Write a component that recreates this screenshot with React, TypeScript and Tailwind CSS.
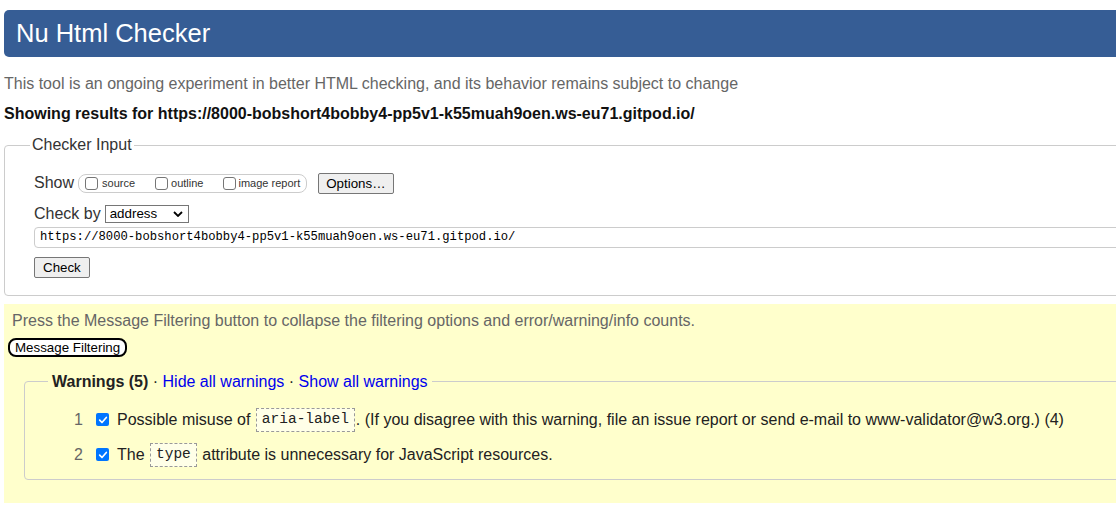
import React from 'react';

function Box({ checked = false }: { checked?: boolean }) {
  if (checked) {
    return (
      <span className="inline-flex h-[13px] w-[13px] items-center justify-center rounded-[2px] bg-[#0075ff]">
        <svg viewBox="0 0 12 12" className="h-[10px] w-[10px]">
          <path d="M2 6.2 L4.8 9 L10 3" fill="none" stroke="white" strokeWidth="2" strokeLinecap="round" strokeLinejoin="round" />
        </svg>
      </span>
    );
  }
  return <span className="inline-block h-[13px] w-[13px] rounded-[3px] border border-[#767676] bg-white" />;
}

function Code({ children }: { children: React.ReactNode }) {
  return (
    <code className="mx-[1px] inline-flex h-[24px] items-center border border-dashed border-[#999] bg-[#ffffe8] px-[5px] font-['Liberation_Mono',monospace] text-[14.5px] text-[#222]">
      {children}
    </code>
  );
}

export default function App() {
  const warnings = [
    {
      n: 1,
      body: (
        <>
          Possible misuse of <Code>aria-label</Code>. (If you disagree with this warning, file an issue report or send e-mail to www-validator@w3.org.) (4)
        </>
      ),
    },
    {
      n: 2,
      body: (
        <>
          The <Code>type</Code> attribute is unnecessary for JavaScript resources.
        </>
      ),
    },
  ];

  return (
    <div className="h-[516px] w-[1116px] overflow-hidden bg-white font-['Liberation_Sans',Arial,sans-serif] text-[16px] text-[#222]">
      <div className="w-[1150px] pl-[4px]">
        <h1 className="mt-[10px] flex h-[47px] items-center rounded-l-[5px] bg-[#365d95] pl-[12px] text-[25.5px] text-white">
          Nu Html Checker
        </h1>

        <p className="mt-[18px] h-[18px] leading-[18px] text-[#666]">
          This tool is an ongoing experiment in better HTML checking, and its behavior remains subject to change
        </p>
        <p className="mt-[12px] h-[18px] font-bold leading-[18px] text-[#111]">
          Showing results for https://8000-bobshort4bobby4-pp5v1-k55muah9oen.ws-eu71.gitpod.io/
        </p>

        <fieldset className="mt-[13px] rounded-[4px] border border-[#ccc] pb-[16px] pl-[29px]">
          <legend className="-ml-[4px] px-[2px] leading-[18px] text-[#333]">Checker Input</legend>

          <div className="mt-[18px] flex h-[22px] items-center">
            <span className="text-[#333]">Show</span>
            <div className="ml-[4px] flex h-[19px] items-center rounded-[8px] border border-[#ccc] pl-[6px] pr-[6px] text-[11px] text-[#333]">
              <Box />
              <span className="ml-[4px] mr-[20px]">source</span>
              <Box />
              <span className="ml-[3px] mr-[20px]">outline</span>
              <Box />
              <span className="ml-[2px]">image report</span>
            </div>
            <button className="ml-[11px] h-[21px] rounded-[2px] border border-[#767676] bg-[#efefef] px-[7px] text-[13.33px] text-black">
              Options…
            </button>
          </div>

          <div className="mt-[10px] flex h-[20px] items-center">
            <span className="text-[#333]">Check by</span>
            <div className="ml-[4px] flex h-[18px] w-[84px] items-center justify-between border border-[#767676] bg-white pl-[4px] pr-[5px] text-[13.33px] text-black">
              <span>address</span>
              <svg viewBox="0 0 10 6" className="h-[6px] w-[10px]">
                <path d="M1 1 L5 5 L9 1" fill="none" stroke="black" strokeWidth="1.8" />
              </svg>
            </div>
          </div>

          <div className="mt-[3px] flex h-[21px] items-center rounded-l-[4px] border border-[#ccc] pl-[5px] font-['Liberation_Mono',monospace] text-[12.2px] text-black">
            https://8000-bobshort4bobby4-pp5v1-k55muah9oen.ws-eu71.gitpod.io/
          </div>

          <button className="mt-[9px] h-[21px] rounded-[2px] border border-[#767676] bg-[#efefef] px-[8px] text-[13.33px] text-black">
            Check
          </button>
        </fieldset>

        <section className="mt-[8px] h-[199px] bg-[#ffffcc] px-[4px] pt-[8px]">
          <p className="ml-[4px] h-[18px] leading-[18px] text-[#666]">
            Press the Message Filtering button to collapse the filtering options and error/warning/info counts.
          </p>
          <button className="mt-[8px] h-[19px] rounded-[8px] border-2 border-black bg-white px-[5px] text-[13.33px] leading-[14px] text-black">
            Message Filtering
          </button>

          <fieldset className="ml-[16px] mt-[14px] rounded-[4px] border border-[#ccc] pb-[12px] pl-[49px]">
            <legend className="-ml-[26px] px-[4px] leading-[18px]">
              <span className="font-bold">Warnings (5)</span> · <span className="text-[#0000ee]">Hide all warnings</span> ·{' '}
              <span className="text-[#0000ee]">Show all warnings</span>
            </legend>
            <ol className="mt-[17px] flex flex-col gap-[11px]">
              {warnings.map((w) => (
                <li key={w.n} className="flex h-[24px] items-center">
                  <span className="w-[9px] text-[#666]">{w.n}</span>
                  <span className="ml-[13px] flex">
                    <Box checked />
                  </span>
                  <span className="ml-[8px] flex items-center whitespace-pre text-[#222]">{w.body}</span>
                </li>
              ))}
            </ol>
          </fieldset>
        </section>
      </div>
    </div>
  );
}
